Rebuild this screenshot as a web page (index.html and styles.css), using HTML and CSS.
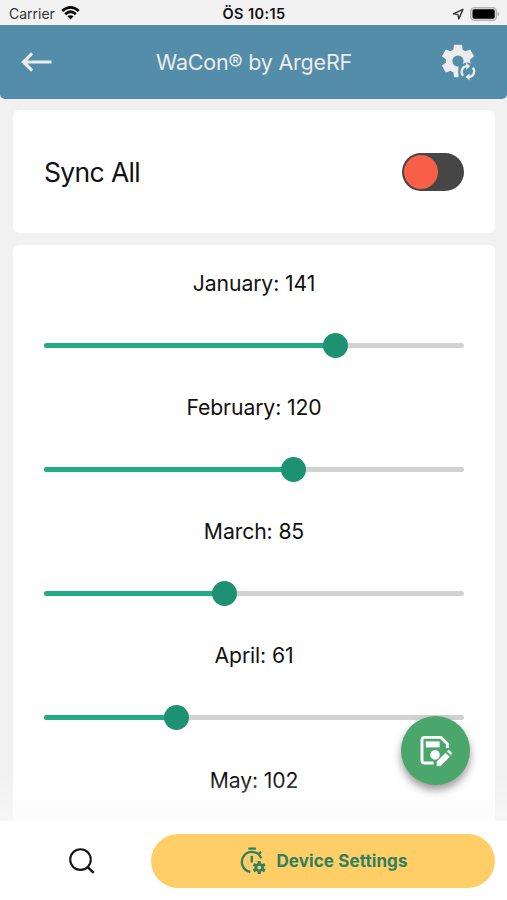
FILE: index.html
```html
<!DOCTYPE html>
<html lang="en">
<head>
<meta charset="utf-8">
<title>Device Settings</title>
<link rel="stylesheet" href="styles.css">
</head>
<body>
<div class="app">
  <div class="status">
    <div class="carrier"><span>Carrier</span>
      <svg width="19" height="14" viewBox="0 0 19 14"><g fill="none" stroke="#080808" stroke-width="2.7"><path d="M1.2 5.1Q9.5-2.2 17.8 5.1"/><path d="M4.2 8.2Q9.5 3.3 14.8 8.2"/></g><path d="M6.4 10.3Q9.5 8 12.6 10.3L9.5 13.5Z" fill="#080808"/></svg>
    </div>
    <div class="clock">ÖS 10:15</div>
    <div class="indicators">
      <svg width="12" height="12" viewBox="0 0 12 12"><path d="M11 1.3L1.3 5.8L5.8 6.4L6.8 10.9Z" fill="none" stroke="#333" stroke-width="1.4" stroke-linejoin="round"/></svg>
      <svg width="30" height="14" viewBox="0 0 30 14"><rect x=".7" y=".7" width="25.8" height="12.6" rx="3.6" fill="#d8d8d8" stroke="#b4b4b4" stroke-width="1.2"/><rect x="2.5" y="2.3" width="22.2" height="9.4" rx="1.8" fill="#000"/><path d="M27.6 4.7Q29.4 5.4 29.4 7T27.6 9.3Z" fill="#aaa"/></svg>
    </div>
  </div>
  <header class="header">
    <svg class="back" width="31" height="22" viewBox="0 0 31 22"><path d="M30.5 11H2.5M11.2 2.4L2.5 11L11.2 19.6" fill="none" stroke="#ececec" stroke-width="3.2"/></svg>
    <h1>WaCon® by ArgeRF</h1>
    <svg class="gear" width="36" height="38" viewBox="0 0 36 38"><path transform="translate(-3.4 -2.4) scale(1.7)" fill="#ececec" d="M19.14 12.94c.04-.3.06-.61.06-.94s-.02-.64-.07-.94l2.03-1.58a.49.49 0 0 0 .12-.61l-1.92-3.32a.49.49 0 0 0-.59-.22l-2.39.96a7 7 0 0 0-1.62-.94L14.4 2.81a.48.48 0 0 0-.48-.41h-3.84a.48.48 0 0 0-.47.41l-.36 2.54c-.59.24-1.13.57-1.62.94l-2.39-.96a.49.49 0 0 0-.59.22L2.74 8.87a.48.48 0 0 0 .12.61l2.03 1.58a6 6 0 0 0 0 1.88l-2.03 1.58a.49.49 0 0 0-.12.61l1.92 3.32c.12.22.37.29.59.22l2.39-.96c.5.38 1.03.7 1.62.94l.36 2.54c.05.24.24.41.48.41h3.84c.24 0 .44-.17.47-.41l.36-2.54a7 7 0 0 0 1.62-.94l2.39.96c.22.08.47 0 .59-.22l1.92-3.32a.49.49 0 0 0-.12-.61ZM12 15.3A3.3 3.3 0 1 1 12 8.7a3.3 3.3 0 0 1 0 6.6Z"/><path d="M17.5 21h18.5v17H17.5Z" fill="#548daa"/><circle cx="26.5" cy="28.5" r="9" fill="#548daa"/><path d="M22.2 32.6A5.6 5.6 0 0 1 25.7 23.2M31.8 24.8A5.6 5.6 0 0 1 28 34" fill="none" stroke="#ececec" stroke-width="2.3"/><path d="M25.2 19.6L29.2 23.2L25.2 26.8ZM28.6 30.4V37.6L24.6 34Z" fill="#ececec"/></svg>
  </header>
  <main class="content">
    <section class="card sync"><h2>Sync All</h2><div class="toggle"><div class="knob"></div></div></section>
    <section class="card months">
      <div class="month"><div class="label">January: 141</div><div class="track"><div class="fill" style="width:291px"></div><div class="thumb"></div></div></div>
      <div class="month"><div class="label">February: 120</div><div class="track"><div class="fill" style="width:249.5px"></div><div class="thumb"></div></div></div>
      <div class="month"><div class="label">March: 85</div><div class="track"><div class="fill" style="width:180px"></div><div class="thumb"></div></div></div>
      <div class="month"><div class="label">April: 61</div><div class="track"><div class="fill" style="width:132.5px"></div><div class="thumb"></div></div></div>
      <div class="month"><div class="label">May: 102</div></div>
    </section>
    <div class="fade"></div>
    <div class="save">
      <svg width="32" height="32" viewBox="0 0 32 32"><path d="M13.5 28H4.6Q2 28 2 25.5V5Q2 2.4 4.6 2.4H20.8L27.4 8.8V13" fill="none" stroke="#fff" stroke-width="2.9" stroke-linejoin="round"/><rect x="5.8" y="6.4" width="13.8" height="6" fill="#fff"/><circle cx="15" cy="19.9" r="4.8" fill="#fff"/><path d="M16.3 31.3V26.6L25.6 17.4L30.1 21.8L20.8 31.3ZM26.7 16.4L28 15.1Q28.8 14.4 29.6 15.1L31.9 17.4Q32.6 18.2 31.9 19L31.2 20.7Z" fill="#fff" stroke="#4aa66a" stroke-width=".7"/></svg>
    </div>
  </main>
  <nav class="nav">
    <div class="search"><svg width="26" height="26" viewBox="0 0 26 26"><circle cx="11.5" cy="11.6" r="10.3" fill="none" stroke="#151515" stroke-width="2.1"/><path d="M18.4 18.8L24.7 24.8" stroke="#151515" stroke-width="2.4"/></svg></div>
    <div class="device">
      <svg width="26" height="28" viewBox="0 0 26 28"><g fill="none" stroke="#2f8061" stroke-width="2.3"><path d="M8.3 1.6H15.9M11.8 8.8V15.5M21.2 11.3A10 10 0 1 0 10.3 24.8M18.2 7.5L21 4.8"/></g><g stroke="#2f8061" stroke-width="3.2"><path d="M19.2 14.1V27.1M13.5 17.3L24.9 23.9M13.5 23.9L24.9 17.3"/></g><circle cx="19.2" cy="20.6" r="4.6" fill="#2f8061"/><circle cx="19.2" cy="20.6" r="1.9" fill="#ffce66"/></svg>
      <span>Device Settings</span>
    </div>
  </nav>
</div>
</body>
</html>
```
FILE: styles.css
```css
* { box-sizing: border-box; }
body { margin: 0; font-family: Inter, "Liberation Sans", sans-serif; color: #111; background: #f1f1f1; }
h1, h2 { margin: 0; font-weight: 400; white-space: nowrap; }
svg { display: block; flex: none; overflow: visible; }
.app { width: 507px; height: 900px; display: flex; flex-direction: column; overflow: hidden; }
.status { height: 25px; padding: 2px 7px 0 9px; display: grid; grid-template-columns: 1fr auto 1fr; align-items: center; background: #f2f2f2; font-size: 14px; line-height: 20px; }
.carrier { display: flex; align-items: center; gap: 6px; color: #333; }
.carrier svg { margin-top: -1px; }
.clock { font-weight: 600; font-size: 14.5px; letter-spacing: 0.4px; margin-left: -1px; }
.indicators { display: flex; justify-content: flex-end; align-items: center; gap: 6px; }
.header { height: 74px; padding: 0 30px 0 21px; display: flex; justify-content: space-between; align-items: center; background: #548daa; border-radius: 0 0 5px 5px; }
.header h1 { font-size: 21.5px; letter-spacing: -0.22px; color: #ececec; margin-left: 15px; }
.content { position: relative; flex: 1; min-height: 0; overflow: hidden; padding: 11px 12px 0 13px; display: flex; flex-direction: column; gap: 12px; }
.card { background: #fff; border-radius: 6px; flex: none; }
.sync { height: 123px; padding: 0 31px; display: flex; align-items: center; justify-content: space-between; }
.sync h2 { font-size: 26.5px; letter-spacing: -0.65px; }
.toggle { width: 62px; height: 38px; padding: 2px; border-radius: 19px; background: #464646; }
.knob { width: 34px; height: 34px; border-radius: 50%; background: #f85f48; }
.months { padding: 25px 31px; }
.month { height: 124.15px; }
.label { height: 26px; line-height: 26px; text-align: center; font-size: 21.2px; letter-spacing: -0.12px; white-space: nowrap; }
.track { height: 5px; margin-top: 46.6px; border-radius: 3px; background: #d2d2d2; display: flex; align-items: center; }
.fill { height: 5px; border-radius: 3px; background: #22ab84; }
.thumb { flex: none; width: 25px; height: 25px; margin-left: -12.5px; border-radius: 50%; background: #1c9272; }
.fade { position: absolute; left: 0; right: 0; bottom: 0; height: 45px; background: linear-gradient(rgba(250,250,250,0), rgba(250,250,250,.6)); }
.save { position: absolute; right: 37px; bottom: 36px; width: 69px; height: 69px; border-radius: 50%; background: #4aa66a; display: flex; align-items: center; justify-content: center; box-shadow: 0 5px 8px rgba(0,0,0,.4); }
.nav { height: 79px; flex: none; background: #fff; padding: 0 12px 0 13px; display: flex; align-items: center; }
.search { width: 138px; display: flex; justify-content: center; }
.device { flex: 1; height: 54px; border-radius: 27px; background: #ffce66; display: flex; align-items: center; justify-content: center; gap: 10px; color: #2f8061; font-size: 17px; font-weight: 700; letter-spacing: 0.1px; padding-left: 2px; }
```
